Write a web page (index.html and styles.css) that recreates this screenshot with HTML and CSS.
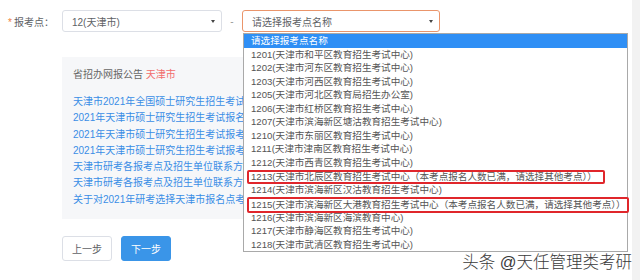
FILE: index.html
```html
<!DOCTYPE html>
<html lang="zh">

<head>
    <meta charset="UTF-8">
    <meta name="viewport" content="width=device-width, initial-scale=1.0">
    <title>报考点选择</title>
    <link rel="stylesheet" href="styles.css">
</head>

<body>
    <div class="page">
        <div class="form-row">
            <label class="field-label"><span class="req">*</span>报考点：</label>
            <div class="select province">
                <span>12(天津市)</span>
                <i class="caret"></i>
            </div>
            <span class="dash">-</span>
            <div class="select-wrap">
                <div class="select point">
                    <span>请选择报考点名称</span>
                    <i class="caret"></i>
                </div>
                <ul class="options">
                    <li class="active">请选择报考点名称</li>
                    <li>1201(天津市和平区教育招生考试中心)</li>
                    <li>1202(天津市河东区教育招生考试中心)</li>
                    <li>1203(天津市河西区教育招生考试中心)</li>
                    <li>1205(天津市河北区教育局招生办公室)</li>
                    <li>1206(天津市红桥区教育招生考试中心)</li>
                    <li>1207(天津市滨海新区塘沽教育招生考试中心)</li>
                    <li>1210(天津市东丽区教育招生考试中心)</li>
                    <li>1211(天津市津南区教育招生考试中心)</li>
                    <li>1212(天津市西青区教育招生考试中心)</li>
                    <li><span class="mark">1213(天津市北辰区教育招生考试中心（本考点报名人数已满，请选择其他考点））</span></li>
                    <li>1214(天津市滨海新区汉沽教育招生考试中心)</li>
                    <li><span class="mark mark-wide">1215(天津市滨海新区大港教育招生考试中心（本考点报名人数已满，请选择其他考点））</span></li>
                    <li>1216(天津市滨海新区海滨教育中心)</li>
                    <li>1217(天津市静海区教育招生考试中心)</li>
                    <li>1218(天津市武清区教育招生考试中心)</li>
                </ul>
            </div>
        </div>

        <div class="notice">
            <p class="notice-title">省招办网报公告 <span>天津市</span></p>
            <a href="#">天津市2021年全国硕士研究生招生考试公告</a>
            <a href="#">2021年天津市硕士研究生招生考试报名须知</a>
            <a href="#">2021年天津市硕士研究生招生考试报考须知</a>
            <a href="#">2021年天津市硕士研究生招生考试报考点安排</a>
            <a href="#">天津市研考各报考点及招生单位联系方式</a>
            <a href="#">天津市研考各报考点及招生单位联系方式</a>
            <a href="#">关于对2021年研考选择天津市报名点考生的提示</a>
        </div>

        <div class="actions">
            <button class="btn">上一步</button>
            <button class="btn btn-primary">下一步</button>
        </div>
    </div>

    <div class="watermark">头条 @天任管理类考研</div>
</body>
</html>
```

FILE: styles.css
```css
body {
    margin: 0;
    padding: 0;
    font-family: "Liberation Sans", "Noto Sans CJK SC", sans-serif;
    font-size: 10px;
    color: #606266;
    background: linear-gradient(to right, #fff 632px, #f2f2f2 632px);
    height: 280px;
    overflow: hidden;
}

.page {
    padding: 10px 0 0 8px;
}

.form-row {
    display: flex;
    align-items: center;
    height: 22px;
}

.field-label {
    width: 54px;
    color: #606266;
}

.req {
    color: #f0803c;
    margin-right: 2px;
}

.select {
    box-sizing: border-box;
    height: 22px;
    display: flex;
    align-items: center;
    justify-content: space-between;
    padding: 0 6px 0 9px;
    border: 1px solid #dcdfe6;
    border-radius: 3px;
    background: #fff;
}

.province {
    width: 160px;
}

.point {
    width: 198px;
    border-color: #ea956b;
}

.caret {
    width: 0;
    height: 0;
    border-left: 2px solid transparent;
    border-right: 2px solid transparent;
    border-top: 3px solid #444;
}

.dash {
    width: 20px;
    text-align: center;
    color: #999;
}

.select-wrap {
    position: relative;
}

/* 下拉列表浮在下面的内容上 */
.options {
    position: absolute;
    top: 23px;
    left: 1px;
    width: 385px;
    box-sizing: border-box;
    margin: 0;
    padding: 0;
    list-style: none;
    background: #fff;
    border: 1px solid #a9a9a9;
    font-size: 9.6px;
    color: #555;
    z-index: 2;
}

.options li {
    height: 13.5px;
    line-height: 13.5px;
    padding-left: 7px;
    white-space: nowrap;
}

.options li.active {
    background: #2f8ff5;
    color: #fff;
}

.mark {
    display: inline-block;
    box-sizing: border-box;
    height: 14px;
    line-height: 10px;
    margin-left: -4px;
    padding: 0 6px 0 2px;
    border: 2px solid #e0262b;
    border-radius: 2px;
    vertical-align: top;
    margin-top: 1px;
}

.mark-wide {
    display: block;
    height: 16px;
    line-height: 12px;
    margin-right: -2px;
    margin-top: 1px;
}

.notice {
    width: 181px;
    height: 162px;
    box-sizing: border-box;
    margin: 25px 0 0 54px;
    padding: 10px 0 10px 11px;
    background: #f6f7f9;
    overflow: hidden;
}

.notice-title {
    margin: 0 0 11px;
    line-height: 16px;
    color: #666;
}

.notice-title span {
    color: #f26d6d;
}

.notice a {
    display: block;
    line-height: 16.3px;
    color: #3a8ee6;
    text-decoration: none;
    white-space: nowrap;
}

.actions {
    display: flex;
    gap: 9px;
    margin: 17px 0 0 54px;
}

.btn {
    width: 50px;
    height: 25px;
    padding: 0;
    font-family: inherit;
    font-size: 10px;
    color: #606266;
    background: #fff;
    border: 1px solid #dcdfe6;
    border-radius: 3px;
}

.btn-primary {
    color: #fff;
    background: #3a95e8;
    border-color: #3a95e8;
}

.watermark {
    position: absolute;
    right: 8px;
    bottom: 7px;
    font-size: 16.5px;
    font-weight: 300;
    color: #3a3a3a;
    text-shadow: 0 0 2px #fff;
}
```
